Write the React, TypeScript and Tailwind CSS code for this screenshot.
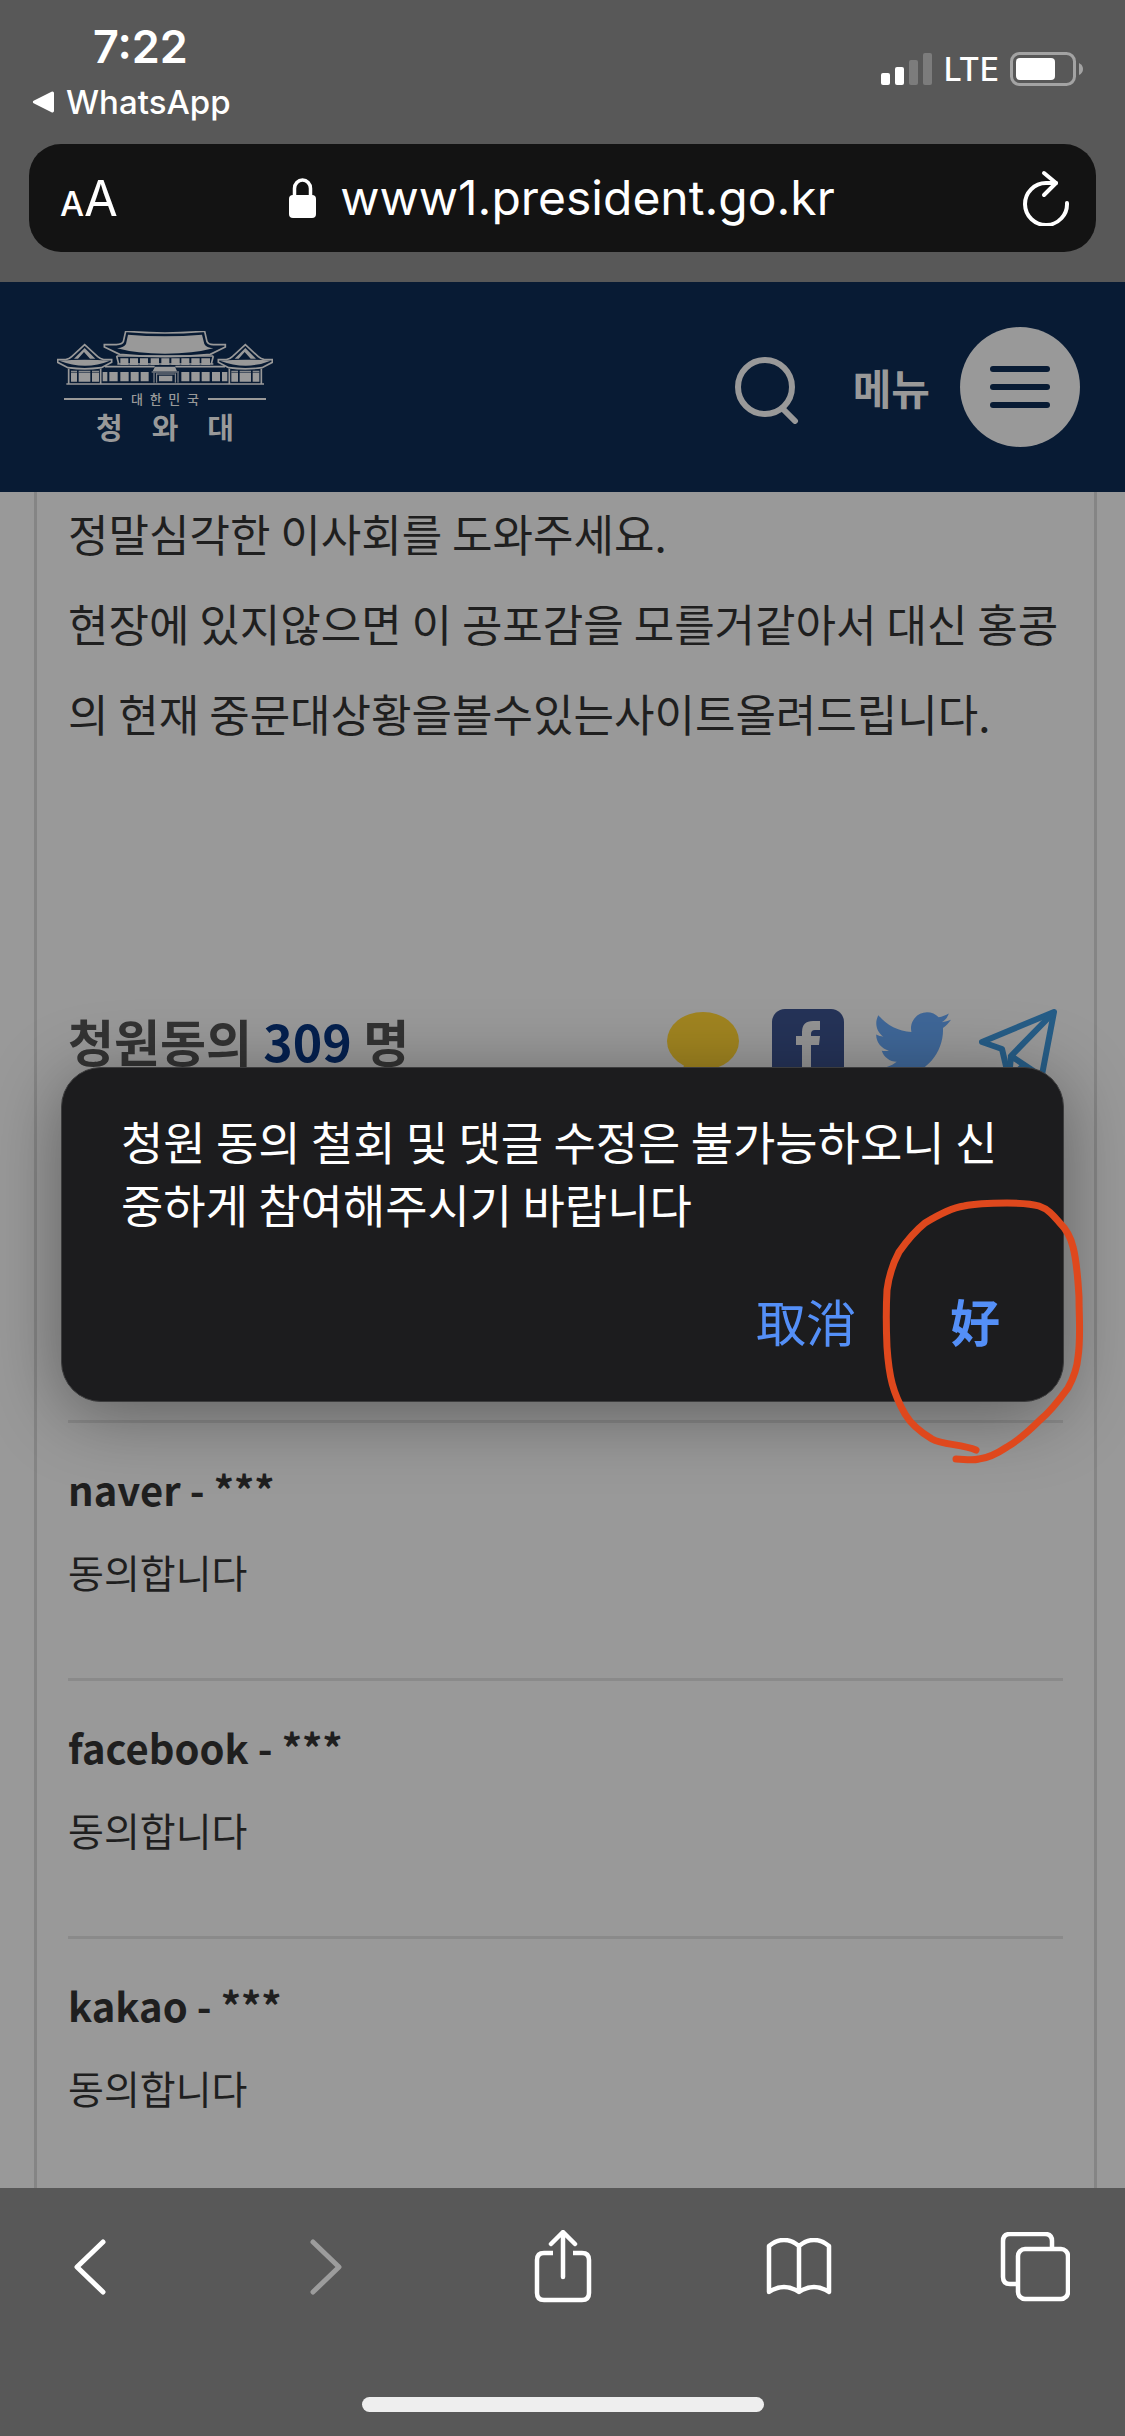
import { FaTwitter } from "react-icons/fa";

const comments = [
  { name: "naver - ***", text: "동의합니다" },
  { name: "facebook - ***", text: "동의합니다" },
  { name: "kakao - ***", text: "동의합니다" },
];

function StatusBar() {
  return (
    <div className="flex items-start justify-between pl-8 pr-[41px] pt-6 text-white">
      <div>
        <div className="pl-[61px] text-[45px] font-semibold leading-[46px]">7:22</div>
        <a href="#whatsapp" className="mt-3 flex items-center gap-3 text-[33px] font-medium leading-10">
          <svg className="h-[22px] w-[22px]" viewBox="0 0 22 22" fill="currentColor">
            <path d="M19.5.8A1.6 1.6 0 0 1 22 2.2v17.6a1.6 1.6 0 0 1-2.5 1.4L1.6 12.3a1.5 1.5 0 0 1 0-2.6z" />
          </svg>
          WhatsApp
        </a>
      </div>
      <div className="mt-7 flex items-end gap-[11px]">
        <svg className="h-[34px] w-[52px]" viewBox="0 0 52 34" fill="#fff">
          <rect x="0" y="21" width="9" height="12" rx="2" />
          <rect x="14" y="15" width="9" height="18" rx="2" />
          <rect x="28" y="8" width="9" height="25" rx="2" opacity="0.22" />
          <rect x="42" y="1" width="9" height="32" rx="2" opacity="0.22" />
        </svg>
        <span className="text-[32px] font-medium leading-8">LTE</span>
        <svg className="h-[34px] w-[74px]" viewBox="0 0 74 34">
          <rect x="1.5" y="1.5" width="63" height="31" rx="8" fill="none" stroke="#a3a3a3" strokeWidth="3" />
          <rect x="6" y="6" width="39" height="22" rx="4" fill="#fff" />
          <path d="M69 11q4 2 4 6t-4 6z" fill="#a3a3a3" />
        </svg>
      </div>
    </div>
  );
}

function AddressBar() {
  return (
    <div className="mx-[29px] mt-[22px] flex h-[108px] items-center justify-between rounded-[32px] bg-[#131313] pl-[31px] pr-[26px] text-white">
      <button aria-label="Text size" className="flex items-baseline leading-none">
        <span className="text-[34px] font-medium">A</span>
        <span className="text-[49px]">A</span>
      </button>
      <div className="flex items-center gap-6 pr-4 text-[48px] leading-[60px]">
        <svg className="h-10 w-[27px]" viewBox="0 0 27 40">
          <path d="M5.5 18v-7.500a8 8.500 0 0 1 16 0V18" fill="none" stroke="#fff" strokeWidth="3.500" />
          <rect y="17" width="27" height="23" rx="4" fill="#fff" />
        </svg>
        www1.president.go.kr
      </div>
      <button aria-label="Reload">
        <svg className="h-[56px] w-[48px]" viewBox="0 0 48 56" fill="none" stroke="#fff" strokeWidth="4" strokeLinecap="round" strokeLinejoin="round">
          <path d="M34 13H24A21 21 0 1 0 45 33" />
          <path d="M22 3l12 10-12 12" />
        </svg>
      </button>
    </div>
  );
}

function Logo() {
  return (
    <a href="#home" className="flex w-[216px] flex-col items-center pt-[6px] text-[#999]">
      <svg className="h-[54px] w-[216px]" viewBox="171 183 648 162" fill="none" stroke="#999" strokeWidth="5">
        {/* main roof */}
        <path d="M384 194q110 10 222 0l7 28q6 11 27 13-60 16-145 16t-144-16q22-3 27-13z" fill="#999" stroke="none" />
        <path d="M377 184h6q112 10 224 0h7l7 31q4 9 19 9h36v7l-45 22q-135 14-272 0l-46-22v-7h36q17-1 21-9z" />
        <path d="M350 258l6 24M640 258l-6 24M350 258h290M352 282h288" />
        <path d="M361 265h24v20h-24zM390 265h24v20h-24zM420 265h24v20h-24zM452 265h25v20h-25zM484 265h24v20h-24zM514 265h25v20h-25zM544 265h24v20h-24zM574 265h25v20h-25zM604 265h26v20h-26z" fill="#999" stroke="none" />
        {/* side roofs */}
        <path d="M173 269h24q11-2 18-9l39-36 39 36q8 7 18 9h24v8l-31 16q-50 7-100 0l-31-16z" />
        <path d="M655 269h24q11-2 18-9l39-36 39 36q8 7 18 9h24v8l-31 16q-50 7-100 0l-31-16z" />
        <path d="M178 272q76-6 152 0-74 30-152 0zM660 272q76-6 152 0-74 30-152 0zM222 266l32-32 32 32h-16l-18-20-18 20zM704 266l32-32 32 32h-16l-18-20-18 20z" fill="#999" stroke="none" />
        {/* walls */}
        <path d="M206 296v46M302 296v46M688 296v46M784 296v46M199 342h593M315 290h149M526 290h149" />
        <path d="M213 302h18v33h-18zM236 302h35v33h-35zM276 302h21v33h-21zM694 302h20v33h-20zM719 302h34v33h-34zM758 302h20v33h-20z" fill="#999" stroke="none" />
        <path d="M308 306h14v28h-14zM328 306h25v28h-25zM361 306h25v28h-25zM392 306h24v28h-24zM422 306h24v28h-24zM544 306h24v28h-24zM574 306h25v28h-25zM605 306h24v28h-24zM636 306h24v28h-24zM666 306h16v28h-16z" fill="#999" stroke="none" />
        <path d="M465 290h60l6 14h-73zM477 317h40v17h-40z" fill="#999" stroke="none" />
        <path d="M455 306h82M462 308v30M470 312h54M470 310v28M526 310v28M534 308v30" strokeWidth="3" />
        <path d="M213 307h18M236 307h61M694 307h84" stroke="#081b34" strokeWidth="2" />
      </svg>
      <div className="mt-1 flex h-5 w-[202px] items-center justify-between">
        <span className="h-[2px] w-[58px] bg-[#999]" />
        <span className="flex w-[68px] justify-between text-[13px] font-medium leading-5">
          <span>대</span>
          <span>한</span>
          <span>민</span>
          <span>국</span>
        </span>
        <span className="h-[2px] w-[58px] bg-[#999]" />
      </div>
      <div className="flex w-[138px] justify-between text-[29px] font-bold leading-10">
        <span>청</span>
        <span>와</span>
        <span>대</span>
      </div>
    </a>
  );
}

function SiteHeader() {
  return (
    <header className="flex h-[210px] items-center justify-between bg-[#081b34] pl-[57px] pr-[45px]">
      <Logo />
      <div className="flex items-center">
        <button aria-label="검색" className="pt-[6px]">
          <svg className="h-[68px] w-[64px]" viewBox="0 0 64 68" fill="none" stroke="#999" strokeWidth="6">
            <circle cx="30" cy="31" r="27" />
            <path d="M48 53l12 12" strokeLinecap="round" />
          </svg>
        </button>
        <span className="ml-[54px] pt-[6px] text-[42px] font-bold leading-[60px] text-[#999]">메뉴</span>
        <button
          aria-label="메뉴 열기"
          className="ml-[30px] flex h-[120px] w-[120px] flex-col items-center justify-center gap-3 rounded-full bg-[#999]"
        >
          <span className="h-[6px] w-[60px] rounded-full bg-[#081b34]" />
          <span className="h-[6px] w-[60px] rounded-full bg-[#081b34]" />
          <span className="h-[6px] w-[60px] rounded-full bg-[#081b34]" />
        </button>
      </div>
    </header>
  );
}

function ShareLinks() {
  return (
    <div className="flex items-start">
      <a href="#kakao" aria-label="KakaoTalk">
        <svg className="h-[76px] w-[72px]" viewBox="0 0 72 76" fill="#a08420">
          <ellipse cx="36" cy="32" rx="36" ry="29" />
          <path d="M18 50l-4 22 22-13z" />
        </svg>
      </a>
      <a href="#facebook" aria-label="Facebook" className="ml-[33px]">
        <svg className="h-[76px] w-[72px]" viewBox="0 0 72 76">
          <rect width="72" height="72" rx="13" fill="#253358" />
          <path d="M48 12v9h-5q-4 0-4 4v2h9l-1 9h-8v36h-9V36h-6v-9h6v-4q0-11 11-11z" fill="#949494" />
        </svg>
      </a>
      <a href="#twitter" aria-label="Twitter" className="ml-[29px]">
        <FaTwitter className="-mt-1 h-[78px] w-[78px] text-[#3f6798]" />
      </a>
      <a href="#telegram" aria-label="Telegram" className="ml-7">
        <svg className="h-[76px] w-[78px]" viewBox="0 0 78 76" fill="none" stroke="#265d87" strokeWidth="6" strokeLinejoin="round">
          <path d="M75 3L3 33l20 7 7 30 14-13 18 14z" />
          <path d="M75 3L32 47l24 16M32 47l-2 22" />
        </svg>
      </a>
    </div>
  );
}

function AlertDialog() {
  return (
    <div
      role="alertdialog"
      aria-describedby="alert-message"
      className="absolute inset-x-[61px] top-[575px] rounded-[40px] border border-[#3c3c3d] bg-[#1c1c1e] px-[59px] pb-[50px] pt-[41px] shadow-[0_12px_72px_rgba(0,0,0,0.38)]"
    >
      <p id="alert-message" className="text-[46px] leading-[63px] text-white">
        청원 동의 철회 및 댓글 수정은 불가능하오니 신중하게 참여해주시기 바랍니다
      </p>
      <div className="mt-[54px] flex justify-end gap-[94px] pr-1 text-[50px] leading-[62px] text-[#548ff7]">
        <button>取消</button>
        <button className="font-bold">好</button>
      </div>
      {/* hand-drawn mark around the confirm button */}
      <svg
        className="pointer-events-none absolute -right-[23px] top-[129px] h-[270px] w-[206px]"
        viewBox="880 1197 206 270"
        fill="none"
        stroke="#df481d"
        strokeWidth="7"
        strokeLinecap="round"
        strokeLinejoin="round"
      >
        <path d="M976 1450C962 1444 943 1445 932 1439C922 1433 912 1426 905 1414C893 1393 889 1377 887 1347C886 1325 886 1308 887 1290C889 1275 892 1265 899 1252C906 1242 915 1231 925 1223C938 1215 951 1208 964 1206C978 1203 993 1203 1007 1203C1018 1203 1030 1203 1039 1206C1048 1209 1053 1215 1059 1222C1066 1229 1071 1238 1073 1247C1077 1262 1078 1280 1079 1297C1079 1318 1081 1337 1078 1357C1077 1369 1073 1379 1068 1388C1060 1399 1051 1411 1040 1420C1030 1430 1019 1440 1007 1447C998 1453 989 1458 979 1459C971 1461 964 1459 956 1459" />
      </svg>
    </div>
  );
}

function Toolbar() {
  return (
    <footer className="flex flex-col items-center bg-[#585858] pb-6 pt-[29px]">
      <nav className="flex w-full justify-between px-[35px]">
        <button aria-label="Back" className="flex h-[100px] w-[110px] items-center justify-center">
          <svg className="h-[56px] w-8" viewBox="0 0 32 56" fill="none" stroke="#fff" strokeWidth="5" strokeLinecap="round" strokeLinejoin="round">
            <path d="M29 3L3 28l26 25" />
          </svg>
        </button>
        <button aria-label="Forward" disabled className="flex h-[100px] w-[110px] items-center justify-center">
          <svg className="h-[56px] w-8" viewBox="0 0 32 56" fill="none" stroke="#9c9c9c" strokeWidth="5" strokeLinecap="round" strokeLinejoin="round">
            <path d="M3 3l26 25L3 53" />
          </svg>
        </button>
        <button aria-label="Share" className="flex h-[100px] w-[110px] items-center justify-center">
          <svg className="h-[74px] w-[58px]" viewBox="0 0 58 74" fill="none" stroke="#fff" strokeWidth="4.500">
            <path d="M19 23H10q-7 0-7 7v33q0 7 7 7h38q7 0 7-7V30q0-7-7-7h-9" />
            <path d="M29 47V3M17 14L29 2l12 12" strokeLinecap="round" strokeLinejoin="round" />
          </svg>
        </button>
        <button aria-label="Bookmarks" className="flex h-[100px] w-[110px] items-center justify-center">
          <svg className="h-[58px] w-[66px]" viewBox="0 0 66 58" fill="none" stroke="#fff" strokeWidth="4.500" strokeLinecap="round" strokeLinejoin="round">
            <path d="M33 8v46M33 8Q18-4 3 8v46q15-10 30 0 15-10 30 0V8Q48-4 33 8z" />
          </svg>
        </button>
        <button aria-label="Tabs" className="flex h-[100px] w-[110px] items-center justify-center">
          <svg className="h-[70px] w-[70px]" viewBox="0 0 70 70" fill="none" stroke="#fff" strokeWidth="4.500">
            <path d="M17 52h-7q-7 0-7-7V9q0-7 7-7h35q7 0 7 7v7" />
            <rect x="18" y="17" width="50" height="50" rx="7" />
          </svg>
        </button>
      </nav>
      <div className="mt-20 h-[15px] w-[402px] rounded-full bg-[#eee]" />
    </footer>
  );
}

export default function App() {
  return (
    <div className="flex min-h-screen flex-col bg-[#585858] font-[Inter,'Noto_Sans_CJK_KR',sans-serif]">
      <div className="pb-[30px]">
        <StatusBar />
        <AddressBar />
      </div>
      <SiteHeader />
      <main className="relative flex grow flex-col bg-[#999] pl-[34px] pr-7 font-['Noto_Sans_CJK_KR',sans-serif] text-[#1f1f1f]">
        <div className="grow border-x-[3px] border-[#858585] px-[31px]">
          <div className="-mt-1 text-[44px] leading-[90px]">
            <p>정말심각한 이사회를 도와주세요.</p>
            <p>현장에 있지않으면 이 공포감을 모를거같아서 대신 홍콩의 현재 중문대상황을볼수있는사이트올려드립니다.</p>
          </div>
          <div className="mt-[251px] flex items-start justify-between pr-[6px]">
            <h2 className="text-[50px] font-bold leading-[62px] text-[#333]">
              청원동의 <span className="text-[#04204f]">309</span> 명
            </h2>
            <ShareLinks />
          </div>
          <ul className="mt-[335px]">
            {comments.map((comment) => (
              <li key={comment.name} className="h-[258px] border-t-[3px] border-[#8a8a8a] pt-9 last:h-[247px]">
                <h3 className="text-[40px] font-bold leading-[60px]">{comment.name}</h3>
                <p className="mt-[22px] text-[39px] leading-[60px]">{comment.text}</p>
              </li>
            ))}
          </ul>
        </div>
        <AlertDialog />
      </main>
      <Toolbar />
    </div>
  );
}
